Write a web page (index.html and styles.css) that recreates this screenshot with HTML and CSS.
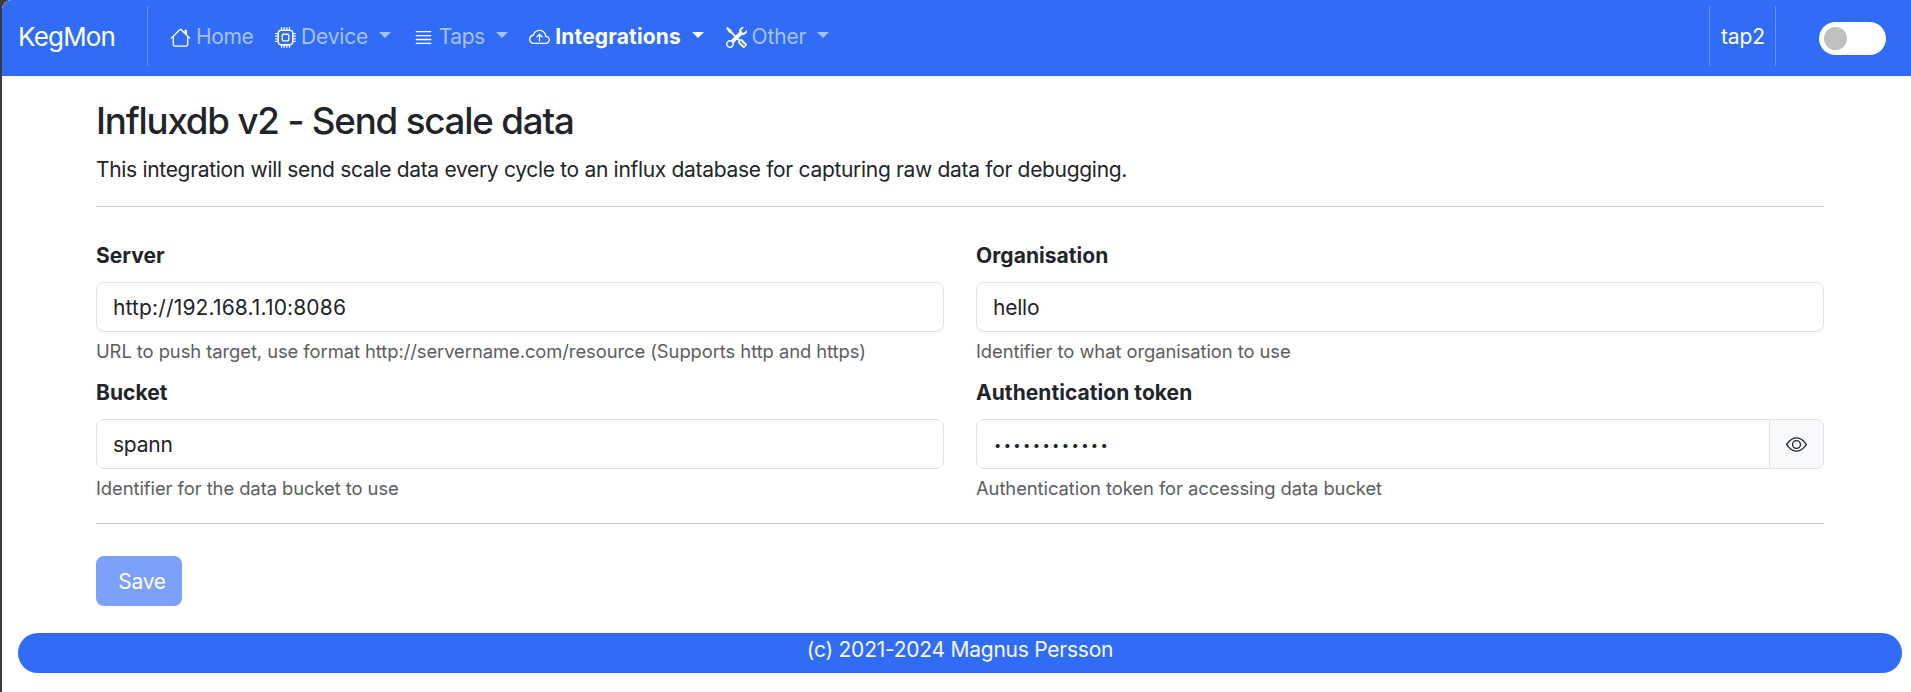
FILE: index.html
```html
<!DOCTYPE html>
<html lang="en">
<head>
<meta charset="utf-8">
<title>KegMon</title>
<link rel="stylesheet" href="styles.css">
</head>
<body>
<nav class="navbar">
  <a class="brand">KegMon</a>
  <ul class="menu">
    <li class="item home">
      <svg class="icon" viewBox="0 0 16 16"><path d="M8.707 1.5a1 1 0 0 0-1.414 0L.646 8.146a.5.5 0 0 0 .708.708L2 8.207V13.5A1.5 1.5 0 0 0 3.5 15h9a1.5 1.5 0 0 0 1.5-1.5V8.207l.646.647a.5.5 0 0 0 .708-.708L13 5.793V2.5a.5.5 0 0 0-.5-.5h-1a.5.5 0 0 0-.5.5v1.293L8.707 1.5ZM13 7.207V13.5a.5.5 0 0 1-.5.5h-9a.5.5 0 0 1-.5-.5V7.207l5-5 5 5Z"/></svg>
      <span>Home</span>
    </li>
    <li class="item device">
      <svg class="icon" viewBox="0 0 16 16"><path d="M5 0a.5.5 0 0 1 .5.5V2h1V.5a.5.5 0 0 1 1 0V2h1V.5a.5.5 0 0 1 1 0V2h1V.5a.5.5 0 0 1 1 0V2A2.5 2.5 0 0 1 14 4.5h1.5a.5.5 0 0 1 0 1H14v1h1.5a.5.5 0 0 1 0 1H14v1h1.5a.5.5 0 0 1 0 1H14v1h1.5a.5.5 0 0 1 0 1H14a2.5 2.5 0 0 1-2.5 2.5v1.5a.5.5 0 0 1-1 0V14h-1v1.5a.5.5 0 0 1-1 0V14h-1v1.5a.5.5 0 0 1-1 0V14h-1v1.5a.5.5 0 0 1-1 0V14A2.5 2.5 0 0 1 2 11.5H.5a.5.5 0 0 1 0-1H2v-1H.5a.5.5 0 0 1 0-1H2v-1H.5a.5.5 0 0 1 0-1H2v-1H.5a.5.5 0 0 1 0-1H2A2.5 2.5 0 0 1 4.5 2V.5A.5.5 0 0 1 5 0zm-.5 3A1.5 1.5 0 0 0 3 4.5v7A1.5 1.5 0 0 0 4.5 13h7a1.5 1.5 0 0 0 1.5-1.5v-7A1.5 1.5 0 0 0 11.5 3h-7zM5 6.5A1.5 1.5 0 0 1 6.5 5h3A1.5 1.5 0 0 1 11 6.5v3A1.5 1.5 0 0 1 9.5 11h-3A1.5 1.5 0 0 1 5 9.5v-3zM6.5 6a.5.5 0 0 0-.5.5v3a.5.5 0 0 0 .5.5h3a.5.5 0 0 0 .5-.5v-3a.5.5 0 0 0-.5-.5h-3z"/></svg>
      <span>Device</span><i class="caret"></i>
    </li>
    <li class="item taps">
      <svg class="icon" viewBox="0 0 16 16"><path d="M2 12.5a.5.5 0 0 1 .5-.5h11a.5.5 0 0 1 0 1h-11a.5.5 0 0 1-.5-.5zm0-3a.5.5 0 0 1 .5-.5h11a.5.5 0 0 1 0 1h-11a.5.5 0 0 1-.5-.5zm0-3a.5.5 0 0 1 .5-.5h11a.5.5 0 0 1 0 1h-11a.5.5 0 0 1-.5-.5zm0-3a.5.5 0 0 1 .5-.5h11a.5.5 0 0 1 0 1h-11a.5.5 0 0 1-.5-.5z"/></svg>
      <span>Taps</span><i class="caret"></i>
    </li>
    <li class="item integrations active">
      <svg class="icon" viewBox="0 0 16 16"><path d="M7.646 5.146a.5.5 0 0 1 .708 0l2 2a.5.5 0 0 1-.708.708L8.5 6.707V10.5a.5.5 0 0 1-1 0V6.707L6.354 7.854a.5.5 0 1 1-.708-.708l2-2z"/><path d="M4.406 3.342A5.53 5.53 0 0 1 8 2c2.69 0 4.923 2 5.166 4.579C14.758 6.804 16 8.137 16 9.773 16 11.569 14.502 13 12.687 13H3.781C1.708 13 0 11.366 0 9.318c0-1.763 1.266-3.223 2.942-3.593.143-.863.698-1.723 1.464-2.383zm.653.757c-.757.653-1.153 1.44-1.153 2.056v.448l-.445.049C2.064 6.805 1 7.952 1 9.318 1 10.785 2.23 12 3.781 12h8.906C13.98 12 15 10.988 15 9.773c0-1.216-1.02-2.228-2.313-2.228h-.5v-.5C12.188 4.825 10.328 3 8 3a4.53 4.53 0 0 0-2.941 1.1z"/></svg>
      <span>Integrations</span><i class="caret"></i>
    </li>
    <li class="item other">
      <svg class="icon" viewBox="0 0 16 16"><path d="M1 0 0 1l2.2 3.081a1 1 0 0 0 .815.419h.07a1 1 0 0 1 .708.293l2.675 2.675-2.617 2.654A3.003 3.003 0 0 0 0 13a3 3 0 1 0 5.878-.851l2.654-2.617.968.968-.305.914a1 1 0 0 0 .242 1.023l3.27 3.27a.997.997 0 0 0 1.414 0l1.586-1.586a.997.997 0 0 0 0-1.414l-3.27-3.27a1 1 0 0 0-1.023-.242L10.5 9.5l-.96-.96 2.68-2.643A3.005 3.005 0 0 0 16 3c0-.269-.035-.53-.102-.777l-2.14 2.141L12 4l-.364-1.757L13.777.102a3 3 0 0 0-3.675 3.68L7.462 6.46 4.793 3.793a1 1 0 0 1-.293-.707v-.071a1 1 0 0 0-.419-.814L1 0Zm9.646 10.646a.5.5 0 0 1 .708 0l2.914 2.915a.5.5 0 0 1-.707.707l-2.915-2.914a.5.5 0 0 1 0-.708ZM3 11l.471.242.529.026.287.445.445.287.026.529L5 13l-.242.471-.026.529-.445.287-.287.445-.529.026L3 15l-.471-.242L2 14.732l-.287-.445L1.268 14l-.026-.529L1 13l.242-.471.026-.529.445-.287.287-.445.529-.026L3 11Z"/></svg>
      <span>Other</span><i class="caret"></i>
    </li>
  </ul>
  <div class="device-name">tap2</div>
  <div class="toggle"><span class="knob"></span></div>
</nav>
<main class="container">
  <h1 class="title">Influxdb v2 - Send scale data</h1>
  <p class="lead">This integration will send scale data every cycle to an influx database for capturing raw data for debugging.</p>
  <hr class="rule">
  <form class="grid">
    <div class="field">
      <label class="label">Server</label>
      <div class="control url">http://192.168.1.10:8086</div>
      <div class="help">URL to push target, use format http://servername.com/resource (Supports http and https)</div>
    </div>
    <div class="field">
      <label class="label">Organisation</label>
      <div class="control">hello</div>
      <div class="help">Identifier to what organisation to use</div>
    </div>
    <div class="field">
      <label class="label">Bucket</label>
      <div class="control">spann</div>
      <div class="help">Identifier for the data bucket to use</div>
    </div>
    <div class="field">
      <label class="label">Authentication token</label>
      <div class="control group"><span class="dots">••••••••••••</span>
        <span class="reveal"><svg class="icon" viewBox="0 0 16 16"><path d="M16 8s-3-5.500-8-5.500S0 8 0 8s3 5.500 8 5.500S16 8 16 8zM1.173 8a13.133 13.133 0 0 1 1.660-2.043C4.120 4.668 5.880 3.500 8 3.500c2.120 0 3.879 1.168 5.168 2.457A13.133 13.133 0 0 1 14.828 8c-.058.087-.122.183-.195.288-.335.480-.830 1.120-1.465 1.755C11.879 11.332 10.119 12.500 8 12.500c-2.120 0-3.879-1.168-5.168-2.457A13.134 13.134 0 0 1 1.172 8z"/><path d="M8 5.500a2.500 2.500 0 1 0 0 5 2.500 2.500 0 0 0 0-5zM4.500 8a3.500 3.500 0 1 1 7 0 3.500 3.500 0 0 1-7 0z"/></svg></span>
      </div>
      <div class="help">Authentication token for accessing data bucket</div>
    </div>
  </form>
  <hr class="rule rule-end">
  <button class="save">Save</button>
</main>
<footer class="footer">(c) 2021-2024 Magnus Persson</footer>
</body>
</html>
```
FILE: styles.css
```css
* { box-sizing: border-box; }

html { background: #3b3b3b; }

body {
  margin: 0 0 0 2px;
  height: 692px;
  overflow: hidden;
  border-top-left-radius: 9px;
  background: #fff;
  color: #212529;
  font: 21px/31px Inter, sans-serif;
  white-space: nowrap;
}

.navbar {
  display: flex;
  align-items: center;
  height: 76px;
  padding: 0 25px 0 16px;
  background: #306cf6;
  color: #fff;
  border-top-left-radius: 9px;
}

.brand {
  display: flex;
  align-items: center;
  width: 130px;
  height: 60px;
  margin-bottom: 4px;
  border-right: 1px solid #648ff8;
  font-size: 26px;
  letter-spacing: -0.8px;
}

.menu {
  display: flex;
  flex: 1;
  gap: 21.7px;
  height: 31px;
  margin: 0 0 3px;
  padding: 0 0 0 22px;
  list-style: none;
}

.item { display: flex; align-items: center; color: #a8c1fb; letter-spacing: -0.15px; }
.item.active { color: #fff; font-weight: 700; letter-spacing: 0.15px; }
.home { letter-spacing: -0.4px; }
.taps { letter-spacing: -0.5px; }

.icon { width: 21px; height: 21px; fill: #fff; flex: none; }

.item .icon { margin: 1px 5px 0 0; }

.caret {
  margin: -4px 0 0 11px;
  border: 6px solid transparent;
  border-top-color: currentColor;
  border-bottom: 0;
}

.device-name {
  width: 67px;
  height: 60px;
  margin: 0 43px 4px 0;
  padding-left: 11px;
  border: solid #648ff8;
  border-width: 0 1px;
  line-height: 61px;
  letter-spacing: -0.1px;
}

.toggle {
  width: 67px;
  height: 33px;
  margin-top: 1px;
  padding: 5px;
  border-radius: 17px;
  background: #fff;
}

.knob { display: block; width: 23px; height: 23px; border-radius: 50%; background: #bfbfbf; }

.container { width: 1728px; margin: 0 0 0 94px; }

.title {
  margin: 0;
  padding-top: 23px;
  font-size: 36.7px;
  font-weight: 550;
  line-height: 44px;
  letter-spacing: -1.18px;
}

.lead { margin: 11px 0 0; letter-spacing: -0.315px; }

.rule { height: 1px; margin: 21px 0 32px; border: 0; background: #c7c8c9; }
.rule-end { margin-top: 10px; }

.grid { display: grid; grid-template-columns: 848px 848px; gap: 0 32px; }

.field { height: 137px; }

.label { display: block; height: 43px; padding-top: 1px; font-weight: 700; letter-spacing: 0.05px; }

.control {
  display: flex;
  align-items: center;
  height: 50px;
  padding-left: 16px;
  border: 1px solid #dee2e6;
  border-radius: 8px;
  letter-spacing: -0.22px;
}

.url { letter-spacing: 0.15px; }

.help { padding-top: 3.5px; color: #5a5e61; font-size: 18.4px; line-height: 30px; letter-spacing: -0.07px; }

.group { justify-content: space-between; }

.dots { font-size: 13px; letter-spacing: 2.37px; padding: 2px 0 0 1px; }

.reveal {
  display: flex;
  align-items: center;
  justify-content: center;
  width: 54px;
  height: 48px;
  border-left: 1px solid #dee2e6;
  border-radius: 0 7px 7px 0;
  background: #f8f9fa;
}

.reveal .icon { fill: #212529; }

.save {
  display: block;
  width: 86px;
  height: 50px;
  padding: 0 0 0 6px;
  border: 0;
  border-radius: 8px;
  background: #7ba0f9;
  color: #fff;
  font: inherit;
  letter-spacing: -0.25px;
}

.footer {
  height: 40px;
  margin: 27px 9px 0 16px;
  border-radius: 20px;
  background: #306cf6;
  color: #f8f9fa;
  text-align: center;
  line-height: 34px;
  letter-spacing: -0.24px;
}
```
